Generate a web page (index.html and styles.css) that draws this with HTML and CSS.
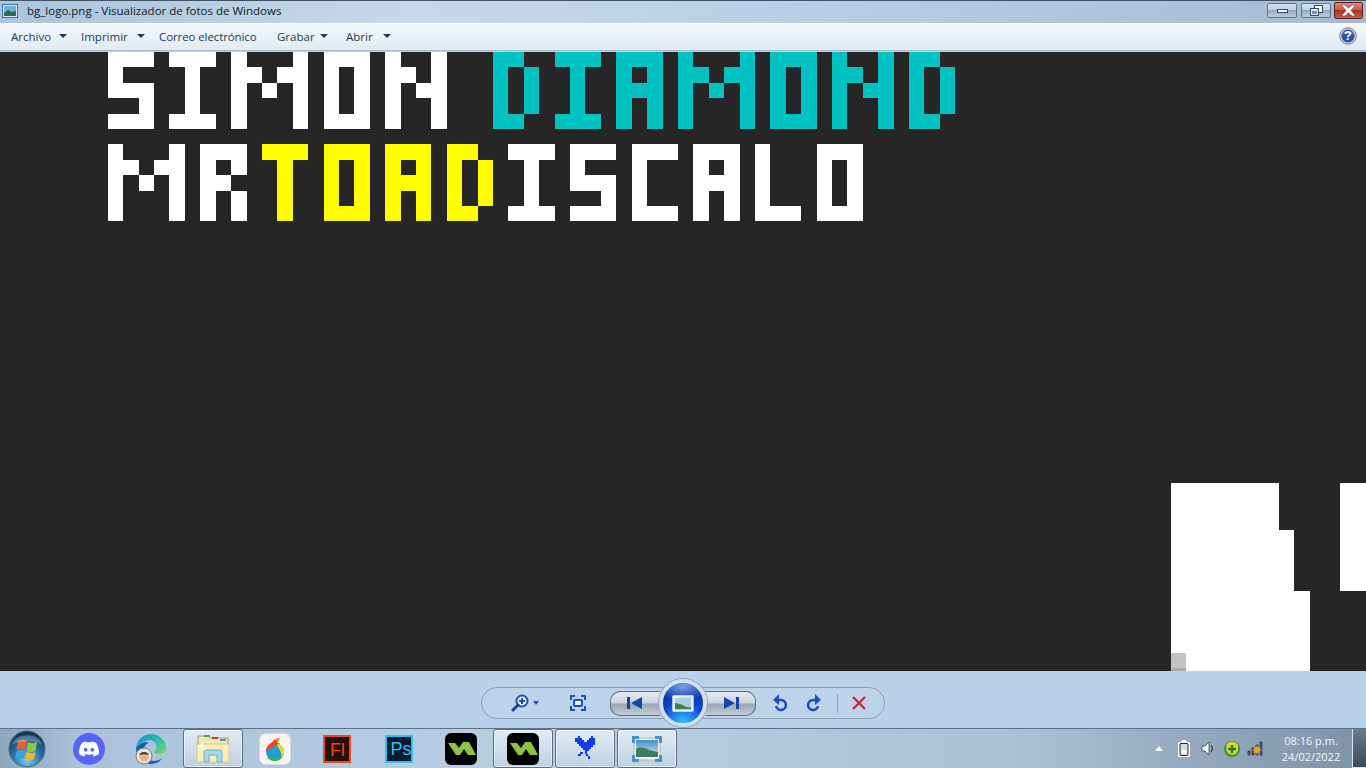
FILE: index.html
```html
<!DOCTYPE html>
<html lang="es">
<head>
<meta charset="utf-8">
<title>bg_logo.png - Visualizador de fotos de Windows</title>
<link rel="stylesheet" href="styles.css">
</head>
<body>
<div class="window">
  <header class="titlebar">
    <svg class="app-icon" viewBox="0 0 16 14"><rect x=".5" y=".5" width="15" height="13" fill="#dfe8f0" stroke="#3f78ad"/><rect x="2" y="2" width="12" height="10" fill="#6fb0d8"/><path d="M2 9l4-3 3 2 5-1v5H2z" fill="#2f6a4c"/><path d="M0 0h3v1H1v2H0zM13 0h3v3h-1V1h-2zM0 11h1v2h2v1H0zM15 11h1v3h-3v-1h2z" fill="#2b6fb0"/></svg>
    <span class="title-text">bg_logo.png - Visualizador de fotos de Windows</span>
    <div class="win-buttons">
      <button class="win-btn"><svg width="11" height="4" viewBox="0 0 11 4"><rect x=".5" y=".5" width="10" height="3" fill="#fff" stroke="#3a4a5c"/></svg></button>
      <button class="win-btn"><svg width="13" height="11" viewBox="0 0 13 11"><rect x="4.5" y=".5" width="8" height="7" fill="#fff" stroke="#3a4a5c"/><rect x=".5" y="3.5" width="8" height="7" fill="#dfe8f0" stroke="#3a4a5c"/><rect x="2" y="6" width="5" height="3" fill="#7d95ad"/></svg></button>
      <button class="win-btn win-btn-close"><svg width="15" height="11" viewBox="0 0 15 11"><path d="M1 0h3l3.500 3L11 0h3v1L10 5.500 14 10v1h-3L7.500 8 4 11H1v-1l4-4.500L1 1z" fill="#fff" stroke="#5a2a2a" stroke-width=".6"/></svg></button>
    </div>
  </header>

  <nav class="menubar">
    <span class="menu-item menu-archivo">Archivo<i class="caret"></i></span>
    <span class="menu-item menu-imprimir">Imprimir<i class="caret"></i></span>
    <span class="menu-item menu-correo">Correo electrónico</span>
    <span class="menu-item menu-grabar">Grabar<i class="caret"></i></span>
    <span class="menu-item menu-abrir">Abrir<i class="caret"></i></span>
    <svg class="help" viewBox="0 0 18 18"><circle cx="9" cy="9" r="8.300" fill="#c9ced6" stroke="#7c8794"/><circle cx="9" cy="9" r="6.500" fill="#2a52a8"/><path d="M3.500 7.500A6 6 0 0 1 14.500 7.500C11 6 7 6 3.500 7.500z" fill="#7f9fdc"/><text x="9" y="13" class="help-q">?</text></svg>
  </nav>

  <main class="stage">
    <svg class="picture" viewBox="0 52 1366 619" role="img" aria-label="bg_logo.png: SIMON DIAMOND, MR TOAD, ISCALO" shape-rendering="crispEdges">
      <path class="px-white" d="M108 52H154V67H123V83H154V129H108V114H139V98H108Z
        M169 52H216V67H200V114H216V129H169V114H185V67H169Z
        M231 52H247V67H262V83H277V67H293V52H308V129H293V83H277V98H262V83H247V129H231Z
        M324 52H370V129H324ZM339 67V114H354V67Z
        M385 52H401V67H416V83H431V52H447V129H431V98H416V83H401V129H385Z
        M108 144H123V160H139V175H154V160H169V144H185V221H169V175H154V191H139V175H123V221H108Z
        M200 144H247V175H231V191H247V221H231V191H216V221H200ZM216 160V175H231V160Z
        M508 144H555V160H539V206H555V221H508V206H524V160H508Z
        M570 144H616V160H585V175H616V221H570V206H601V191H570Z
        M632 144H678V160H647V206H678V221H632Z
        M693 144H740V221H724V191H709V221H693ZM709 160V175H724V160Z
        M755 144H770V206H801V221H755Z
        M817 144H863V221H817ZM832 160V206H847V160Z
        M1171 483H1279V530H1294V591H1310V671H1171Z
        M1340 483H1366V591H1340Z" fill-rule="evenodd"/>
      <path class="px-teal" d="M493 52H524V67H508V114H524V129H493ZM524 67H539V114H524Z
        M555 52H601V67H585V114H601V129H555V114H570V67H555Z
        M616 52H663V129H647V98H632V129H616ZM632 67V83H647V67Z
        M678 52H693V67H709V83H724V67H740V52H755V129H740V83H724V98H709V83H693V129H678Z
        M770 52H817V129H770ZM786 67V114H801V67Z
        M832 52H847V67H863V83H878V52H894V129H878V98H863V83H847V129H832Z
        M909 52H940V67H924V114H940V129H909ZM940 67H955V114H940Z" fill-rule="evenodd"/>
      <path class="px-yellow" d="M262 144H308V160H293V221H277V160H262Z
        M324 144H370V221H324ZM339 160V206H354V160Z
        M385 144H431V221H416V191H401V221H385ZM401 160V175H416V160Z
        M447 144H478V160H462V206H478V221H447ZM478 160H493V206H478Z" fill-rule="evenodd"/>
      <rect class="px-grey" x="1171" y="653" width="15" height="15"/>
      <rect class="px-grey2" x="1171" y="668" width="15" height="3"/>
    </svg>
  </main>

  <section class="controls">
    <div class="pill">
      <svg class="c-zoom" viewBox="0 0 18 18"><circle cx="11" cy="7" r="5.500" fill="#eaf2fb" stroke="#1d4fb4" stroke-width="2"/><path d="M7 11l-5 5" stroke="#17409a" stroke-width="3" stroke-linecap="round"/><path d="M8 7h6M11 4v6" stroke="#1d4fb4" stroke-width="2"/></svg>
      <i class="c-caret"></i>
      <svg class="c-fit" viewBox="0 0 16 16"><path d="M1 5V1h4M11 1h4v4M15 11v4h-4M5 15H1v-4" fill="none" stroke="#1d4fb4" stroke-width="2"/><rect x="4" y="5" width="8" height="6" rx="1" fill="#eaf2fb" stroke="#1d4fb4" stroke-width="2"/></svg>
      <button class="seg seg-prev"><svg width="15" height="12" viewBox="0 0 15 12"><path d="M0 0h3v12H0zM15 0v12L4 6z" fill="#1446ae"/></svg></button>
      <button class="big">
        <svg width="22" height="17" viewBox="0 0 24 19"><rect x=".5" y=".5" width="23" height="18" rx="1" fill="#eef1f3" stroke="#cfd6dc"/><rect x="3" y="3" width="18" height="13" fill="#a9cfe2"/><path d="M3 9l6 1 6 3 6 1v2H3z" fill="#3f7f56"/></svg>
      </button>
      <button class="seg seg-next"><svg width="15" height="12" viewBox="0 0 15 12"><path d="M15 0h-3v12h3zM0 0v12L11 6z" fill="#1446ae"/></svg></button>
      <svg class="c-rot c-undo" viewBox="0 0 16 18"><path d="M4 6h5a5 5 0 1 1-5 6" fill="none" stroke="#1d4fb4" stroke-width="2.600"/><path d="M7 0v11L1 6z" fill="#1d4fb4"/></svg>
      <svg class="c-rot c-redo" viewBox="0 0 16 18"><path d="M12 6H7a5 5 0 1 0 5 6" fill="none" stroke="#1d4fb4" stroke-width="2.600"/><path d="M9 0v11l6-5z" fill="#1d4fb4"/></svg>
      <i class="c-div"></i>
      <svg class="c-del" viewBox="0 0 16 16"><path d="M2 2l12 12M14 2L2 14" stroke="#c4272b" stroke-width="2.200"/></svg>
    </div>
  </section>

  <footer class="taskbar">
    <div class="start">
      <svg width="38" height="38" viewBox="0 0 38 38"><defs><radialGradient id="orb" cx=".5" cy=".8" r=".75"><stop offset="0" stop-color="#7fd0e8"/><stop offset=".5" stop-color="#2a76a8"/><stop offset="1" stop-color="#0f3656"/></radialGradient></defs><circle cx="19" cy="19" r="18" fill="url(#orb)" stroke="#55697c"/><path d="M10 11c3-2 6-2 9 0l-1.500 9c-3-2-6-2-9 0z" fill="#e8622c"/><path d="M20 12c3 1.500 6 1.500 9 0l-1.500 9c-3 1.500-6 1.500-9 0z" fill="#8ec63f"/><path d="M8.500 21c3-2 6-2 9 0l-1.500 8c-3-2-6-2-9 0z" fill="#3aa0dc"/><path d="M18.500 22c3 1.500 6 1.500 9 0l-1.500 7c-3 1.500-6 1.500-9 0z" fill="#f4b41e"/><path d="M4 15C7 2 31 2 34 15 26 10 12 10 4 15z" fill="#fff" opacity=".25"/></svg>
    </div>
    <div class="task">
      <svg width="32" height="32" viewBox="0 0 32 32"><circle cx="16" cy="16" r="16" fill="#5865f2"/><svg x="6" y="6" width="20" height="20" viewBox="0 0 24 24"><path fill="#fff" d="M20.317 4.37a19.791 19.791 0 0 0-4.885-1.515.074.074 0 0 0-.079.037c-.21.375-.444.865-.608 1.25a18.27 18.27 0 0 0-5.487 0 12.64 12.64 0 0 0-.617-1.25.077.077 0 0 0-.079-.037A19.736 19.736 0 0 0 3.677 4.37a.07.07 0 0 0-.032.027C.533 9.046-.32 13.58.099 18.058a.082.082 0 0 0 .031.056c2.053 1.508 4.041 2.423 5.993 3.03a.078.078 0 0 0 .084-.028c.462-.63.873-1.295 1.226-1.994a.076.076 0 0 0-.042-.106 13.107 13.107 0 0 1-1.872-.892.077.077 0 0 1-.008-.128c.126-.094.252-.192.372-.291a.074.074 0 0 1 .078-.01c3.928 1.793 8.18 1.793 12.061 0a.074.074 0 0 1 .079.01c.12.099.246.198.373.292a.077.077 0 0 1-.007.128c-.598.349-1.22.645-1.873.891a.077.077 0 0 0-.041.107c.36.698.772 1.363 1.225 1.993a.076.076 0 0 0 .084.029c1.961-.607 3.95-1.522 6.002-3.03a.077.077 0 0 0 .032-.055c.5-5.177-.838-9.674-3.549-13.66a.061.061 0 0 0-.031-.03zM8.020 15.331c-1.183 0-2.157-1.086-2.157-2.419s.956-2.419 2.157-2.419c1.21 0 2.176 1.095 2.157 2.420 0 1.332-.956 2.418-2.157 2.418zm7.975 0c-1.183 0-2.157-1.086-2.157-2.419s.955-2.419 2.157-2.419c1.21 0 2.176 1.095 2.157 2.420 0 1.332-.946 2.418-2.157 2.418z"/></svg></svg>
    </div>
    <div class="task">
      <svg width="32" height="32" viewBox="0 0 32 32"><defs><linearGradient id="edge" x1="0" y1="0" x2="1" y2="1"><stop offset="0" stop-color="#1c8fd8"/><stop offset=".6" stop-color="#35c1a5"/><stop offset="1" stop-color="#7fd84a"/></linearGradient></defs><path d="M1 15C2 6 9 1 16 1c9 0 15 7 15 14 0 4-3 6-7 6-3 0-5-1-5-3 2-1 3-3 2-6-1-4-6-6-10-4C7 10 3 12 1 15z" fill="url(#edge)"/><path d="M1 15c3-4 9-7 13-5-4 1-6 5-5 10 1 5 5 8 10 8 3 0 6-1 8-3-2 4-7 6-11 6C8 31 1 24 1 15z" fill="#0f5fb0"/><circle cx="9" cy="23" r="8" fill="#e8e4dc" stroke="#7f7f7f"/><circle cx="9" cy="24" r="4.500" fill="#e8b48c"/><path d="M4 22c1-4 9-4 10 0-3-1-7-1-10 0z" fill="#5b3420"/></svg>
    </div>
    <div class="task task-on">
      <svg width="34" height="29" viewBox="0 0 34 29"><path d="M2 2h10l2 2h18v8H2z" fill="#f2e6b4" stroke="#a89a6a"/><rect x="8" y="1" width="6" height="2" fill="#3fae49"/><rect x="16" y="3" width="6" height="2" fill="#c9352c"/><rect x="24" y="5" width="6" height="2" fill="#3c8fd8"/><path d="M1 10h32v18H1z" fill="#fbeeb8" stroke="#d8c68a"/><path d="M8 28v-9q0-3 3-3h12q3 0 3 3v9h-5v-7h-8v7z" fill="#a9d6ea" stroke="#6faacc"/><path d="M6 8l1.500 3 3 1-3 1L6 16l-1.500-3-3-1 3-1z" fill="#fff"/></svg>
    </div>
    <div class="task">
      <svg width="32" height="32" viewBox="0 0 32 32"><rect x=".5" y=".5" width="31" height="31" rx="6" fill="#f4f4f2" stroke="#d8d8d8"/><circle cx="16" cy="19" r="9" fill="#1e9fd8"/><path d="M16 10a9 9 0 0 1 9 9c0 2-1 4-2 5-1-6-3-9-7-14z" fill="#f0d820"/><path d="M8 24a9 9 0 0 0 15 0c-4 1-10 1-15 0z" fill="#3cb44a"/><path d="M7 18c0-6 6-8 8-11 3-1 5 0 5 0l-2 3 3 0c-2 2-5 2-7 4-2 1-4 3-7 4z" fill="#e8452c"/><path d="M15 7c2-2 4-2 6-2l-1 3z" fill="#f39a2c"/></svg>
    </div>
    <div class="task">
      <svg width="28" height="28" viewBox="0 0 28 28"><rect x="1" y="1" width="26" height="26" fill="#2a0d06" stroke="#f04a1c" stroke-width="2"/><text x="7" y="20.500" class="app-letter app-fl">Fl</text></svg>
    </div>
    <div class="task">
      <svg width="28" height="28" viewBox="0 0 28 28"><rect x="1" y="1" width="26" height="26" fill="#0a1a30" stroke="#2fc0f4" stroke-width="2"/><text x="5.500" y="20" class="app-letter app-ps">Ps</text></svg>
    </div>
    <div class="task">
      <svg class="gm" width="32" height="32" viewBox="0 0 32 32"><use href="#gm-shape"/></svg>
    </div>
    <div class="task task-on">
      <svg class="gm" width="32" height="32" viewBox="0 0 32 32"><defs><g id="gm-shape"><rect width="32" height="32" rx="6" fill="#000"/><path d="M3 10H10L14 15 18 9H24L31 22H23L19 16 15 22H11z" fill="#8bc540"/></g></defs><use href="#gm-shape"/></svg>
    </div>
    <div class="task task-on">
      <svg width="22" height="28" viewBox="0 0 22 28" shape-rendering="crispEdges"><path d="M4 1h2v2h2v2h2v2h3V5h2V3h2V1h2v2h2v7h-2v2h-2v2h-2v2h-2v3h1v2h2v3h-2v-3h-2v-2h-1v-4h-3v2H9v2H7v2H4v-2h2v-2h2v-2h1v-2H7v-2H5v-2H3V7H1V3h3z" fill="#0c3bf2"/></svg>
    </div>
    <div class="task task-on">
      <svg width="30" height="26" viewBox="0 0 30 26"><defs><linearGradient id="sky" x1="0" y1="0" x2="0" y2="1"><stop offset="0" stop-color="#3f8fc4"/><stop offset="1" stop-color="#d4eaf2"/></linearGradient></defs><rect x="2" y="2" width="26" height="22" fill="#f2efe9" stroke="#b9b5ad"/><rect x="4" y="4" width="22" height="17" fill="url(#sky)"/><path d="M4 13c5-3 9-1 13 1l9 2v5H4z" fill="#3f7a5e"/><path d="M0 0h7v3H3v4H0zM23 0h7v7h-3V3h-4zM0 19h3v4h4v3H0zM27 19h3v7h-7v-3h4z" fill="#4f8fc8"/></svg>
    </div>
    <div class="tray">
      <i class="tray-up"></i>
      <svg class="t-bat" width="12" height="17" viewBox="0 0 12 17"><path d="M4 .5h4v2h3.500v14H.5v-14H4z" fill="#fff" stroke="#fff"/><rect x="2" y="3.500" width="8" height="12" rx="1" fill="#d5dbe1" stroke="#222"/><rect x="3.500" y="10" width="5" height="4" fill="#fff"/></svg>
      <svg class="t-vol" width="14" height="15" viewBox="0 0 14 15"><path d="M1 5h3l4-4v13L4 10H1z" fill="#f4f6f8" stroke="#3a4550" stroke-width=".8"/><path d="M10 4q2.500 3.500 0 7" fill="none" stroke="#2c333a" stroke-width="1.100"/></svg>
      <svg class="t-sec" width="16" height="16" viewBox="0 0 16 16"><circle cx="8" cy="8" r="8" fill="#2e9a3c"/><path d="M3 3a7 7 0 0 1 11 1v5a6 6 0 0 1-10 3C2 10 2 6 3 3z" fill="#ecd51c"/><path d="M8 4v8M4 8h8" stroke="#1f7a2c" stroke-width="2.400"/></svg>
      <svg class="t-net" width="17" height="15" viewBox="0 0 17 15"><path d="M1 10h2v4H1zM5 7h2v7H5zM9 4h2v10H9zM13 1h2v13h-2z" fill="#5a6978" stroke="#20262c" stroke-width=".7"/><circle cx="10" cy="9" r="3" fill="#f4a21c"/><path d="M10 4.500v9M5.500 9h9M7 6l6 6M13 6l-6 6" stroke="#f4a21c"/></svg>
      <div class="clock"><span>08:16 p.m.</span><span>24/02/2022</span></div>
      <i class="show-desktop"></i>
    </div>
  </footer>
</div>
</body>
</html>
```
FILE: styles.css
```css
* { box-sizing: border-box; }
html, body { margin: 0; height: 100%; overflow: hidden; }
body { font-family: "Open Sans", "Noto Sans", "Liberation Sans", sans-serif; color: #1c2a3a; }
svg { display: block; flex: none; }
i { display: block; flex: none; }
button { border: 0; padding: 0; background: none; }

.window { width: 1366px; height: 768px; display: flex; flex-direction: column; background: #b9d1ea; }

.titlebar {
  height: 23px; display: flex; align-items: center; padding: 0 0 3px 2px;
  background: linear-gradient(90deg, #a9c4dd 0, #c6d9ea 30%, #b7cfe6 60%, #a3bcd4 100%);
  border-top: 1px solid #44525f;
}
.app-icon { width: 16px; height: 14px; margin-right: 9px; }
.title-text { font-size: 11.500px; color: #101820; }
.win-buttons { margin-left: auto; display: flex; gap: 4px; padding-right: 3px; align-self: flex-start; padding-top: 2px; }
.win-btn {
  width: 30px; height: 15px; display: flex; align-items: center; justify-content: center;
  border: 1px solid #5f7488; border-radius: 2px;
  background: linear-gradient(#d3e2f0 0, #bdd1e4 45%, #90a9c2 50%, #b9cee2 100%);
}
.win-btn-close {
  width: 29px; height: 17px; margin-top: -1px; margin-left: -1px; border-color: #5a2426;
  background: linear-gradient(#dc8a78 0, #cc5b49 45%, #ad2f22 50%, #c9604c 100%);
}

.menubar {
  height: 28px; display: flex; align-items: center; padding: 0 9px 2px 11px; font-size: 11.500px; color: #1b3a5c;
  background: linear-gradient(#f4f8fb 0, #e0eaf3 100%);
  border-top: 1px solid #fff; border-bottom: 1px solid #a7bcd2;
}
.menu-item { display: flex; align-items: center; justify-content: space-between; padding-right: 14px; }
.menu-archivo { width: 70px; }
.menu-imprimir { width: 78px; }
.menu-correo { width: 118px; letter-spacing: -0.1px; }
.menu-grabar { width: 69px; padding-right: 18px; }
.menu-abrir { width: 59px; padding-right: 14px; }
.caret { width: 0; height: 0; border: 4px solid transparent; border-top: 4px solid #1b3a5c; border-bottom: 0; }
.help { width: 18px; height: 18px; margin-left: auto; }
.help-q { font: 700 12px "Liberation Sans", sans-serif; fill: #fff; text-anchor: middle; }

.stage { height: 619px; margin-top: 1px; background: #262626; overflow: hidden; flex: none; }
.picture { width: 1366px; height: 619px; }
.px-white { fill: #fff; }
.px-teal { fill: #00c2c2; }
.px-yellow { fill: #ff0; }
.px-grey { fill: #c3c3c3; }
.px-grey2 { fill: #aaa; }

.controls { height: 57px; flex: none; display: flex; justify-content: center; padding-top: 16px; background: #b9d1ea; }
.pill {
  width: 404px; height: 32px; display: flex; align-items: center; padding-left: 28px;
  border: 1px solid #8d9fb3; border-radius: 16px; background: #bcd3ea;
}
.c-zoom { width: 18px; height: 18px; margin-left: 1px; }
.c-caret { width: 0; height: 0; margin: 0 0 0 4px; border: 3.500px solid transparent; border-top: 4px solid #1d4fb4; border-bottom: 0; }
.c-fit { width: 16px; height: 16px; margin-left: 31px; }
.seg {
  width: 50px; height: 25px; display: flex; align-items: center; justify-content: center;
  border: 1px solid #5f6e7e;
  background: linear-gradient(#e4e9ee 0, #ccd6df 45%, #9aa7b4 55%, #c2ccd6 100%);
}
.seg-prev { margin-left: 24px; border-radius: 10px 0 0 10px; border-right: 0; padding-right: 2px; }
.seg-next { border-radius: 0 10px 10px 0; border-left: 0; padding-left: 2px; }
.big {
  width: 48px; height: 48px; margin: 0 -1px; position: relative; z-index: 1; display: flex; align-items: center; justify-content: center;
  border-radius: 50%; border: 4px solid #d3dfeb; box-shadow: 0 0 0 1px #8d9fb3;
  background:
    radial-gradient(ellipse 70% 35% at 50% 8%, rgba(160,200,255,.75) 0, rgba(160,200,255,0) 100%),
    radial-gradient(circle at 50% 100%, #35c0ff 0, #0a48d0 50%, #05207e 100%);
}
.c-rot { width: 16px; height: 18px; }
.c-undo { margin-left: 16px; }
.c-redo { margin-left: 18px; }
.c-div { width: 1px; height: 19px; margin-left: 15px; background: #8d9fb3; }
.c-del { width: 16px; height: 16px; margin-left: 13px; }

.taskbar {
  height: 40px; flex: none; display: flex; align-items: stretch; gap: 2px;
  border-top: 1px solid #5d7186;
  background: linear-gradient(90deg, #8fa6bd 0, #aac2da 6%, #b9cfe4 40%, #aac0d5 75%, #7e92a6 100%);
}
.start { width: 57px; padding-left: 8px; display: flex; align-items: center; }
.task { width: 60px; display: flex; align-items: center; justify-content: center; border: 1px solid transparent; }
.task-on {
  border: 1px solid #5a6f84; border-radius: 3px;
  background: linear-gradient(#e2ebf4 0, #bed0e3 100%);
  box-shadow: inset 0 0 0 1px rgba(255,255,255,.55);
}
.app-letter { font: 400 18px "Liberation Sans", sans-serif; }
.app-fl { fill: #f04a1c; }
.app-ps { fill: #2fc0f4; }
.tray { margin-left: auto; display: flex; align-items: center; color: #fff; }
.tray-up { width: 0; height: 0; border: 4.500px solid transparent; border-bottom: 5px solid #fff; border-top: 0; margin-right: 15px; }
.t-bat { margin-right: 11px; }
.t-vol { margin-right: 9px; }
.t-sec { margin-right: 7px; }
.t-net { margin-right: 11px; }
.clock { width: 72px; display: flex; flex-direction: column; align-items: center; font-size: 11px; line-height: 16px; color: #f2f6fa; }
.show-desktop {
  width: 14px; height: 39px; margin-left: 5px; border: 1px solid #dbe4ec; border-right: 0; border-top: 0;
  background: linear-gradient(#6a7c8e 0, #3c4a58 100%);
}
```
